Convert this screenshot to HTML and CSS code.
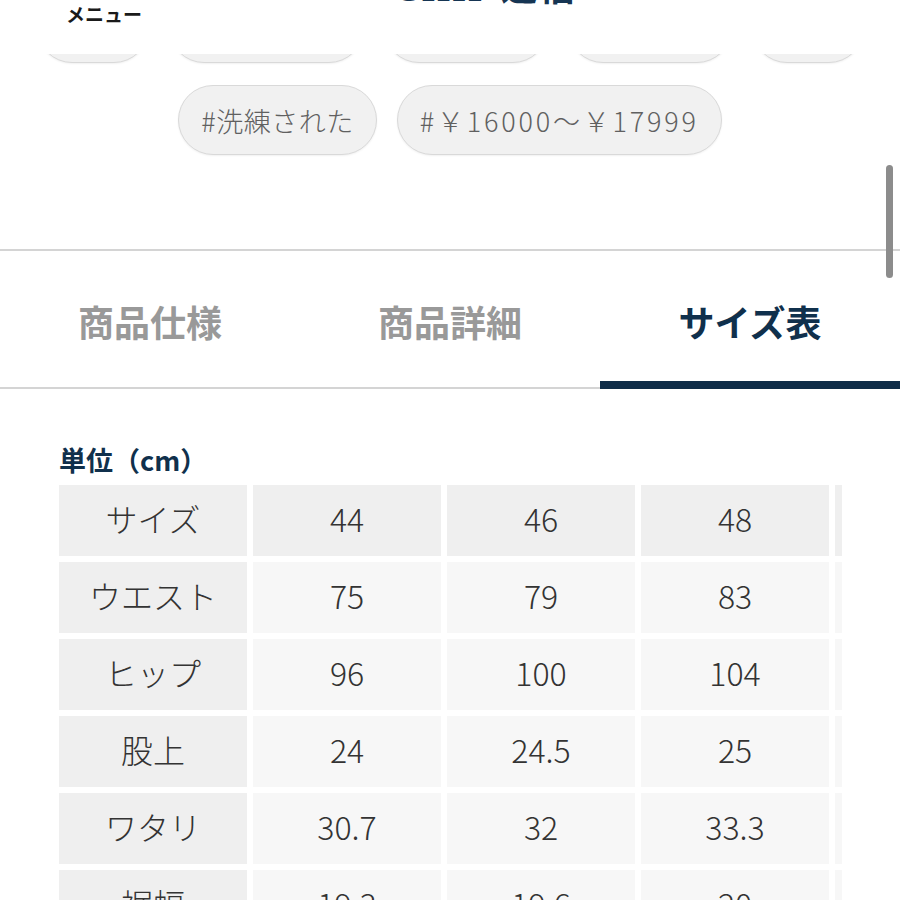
FILE: index.html
```html
<!DOCTYPE html>
<html lang="ja">
<head>
<meta charset="utf-8">
<title>サイズ表</title>
<link rel="stylesheet" href="styles.css">
</head>
<body>
<header class="header">
  <span class="menu-label">メニュー</span>
  <span class="logo">SHIP 通信</span>
</header>
<div class="scrollbar"></div>

<section class="tags">
  <div class="tag-row">
    <span class="chip w1"></span>
    <span class="chip w2"></span>
    <span class="chip w3"></span>
    <span class="chip w3"></span>
    <span class="chip w1"></span>
  </div>
  <div class="tag-row">
    <span class="chip">#洗練された</span>
    <span class="chip chip-price">#￥16000～￥17999</span>
  </div>
</section>

<nav class="tabs">
  <div class="tab">商品仕様</div>
  <div class="tab">商品詳細</div>
  <div class="tab active">サイズ表</div>
</nav>

<section class="size">
  <h2 class="unit">単位（cm）</h2>
  <div class="table-wrap">
    <div class="table">
      <div class="cell head">サイズ</div><div class="cell head">44</div><div class="cell head">46</div><div class="cell head">48</div><div class="cell head">50</div>
      <div class="cell label">ウエスト</div><div class="cell">75</div><div class="cell">79</div><div class="cell">83</div><div class="cell">87</div>
      <div class="cell label">ヒップ</div><div class="cell">96</div><div class="cell">100</div><div class="cell">104</div><div class="cell">108</div>
      <div class="cell label">股上</div><div class="cell">24</div><div class="cell">24.5</div><div class="cell">25</div><div class="cell">25.5</div>
      <div class="cell label">ワタリ</div><div class="cell">30.7</div><div class="cell">32</div><div class="cell">33.3</div><div class="cell">34.6</div>
      <div class="cell label">裾幅</div><div class="cell">19.3</div><div class="cell">19.6</div><div class="cell">20</div><div class="cell">20.4</div>
    </div>
  </div>
</section>
</body>
</html>
```
FILE: styles.css
```css
html, body {
  margin: 0;
  padding: 0;
  background: #ffffff;
  font-family: "Noto Sans CJK JP", "Noto Sans", sans-serif;
  color: #333333;
}

.header {
  position: fixed;
  top: 0;
  left: 0;
  right: 0;
  height: 54px;
  background: #ffffff;
  z-index: 5;
  overflow: hidden;
}

.menu-label {
  position: absolute;
  left: 66px;
  top: 0px;
  font-size: 19px;
  font-weight: 700;
  line-height: 28px;
  color: #1a1a1a;
}

.logo {
  position: absolute;
  left: 400px;
  top: -31px;
  font-family: "Liberation Serif", "Noto Sans CJK JP", serif;
  font-size: 36px;
  line-height: 40px;
  font-weight: 700;
  color: #163553;
  letter-spacing: 2px;
}

.scrollbar {
  position: fixed;
  left: 886px;
  top: 165px;
  width: 7px;
  height: 113px;
  border-radius: 4px;
  background: #8c8c8c;
  z-index: 6;
}

.tags {
  margin-top: -7px;
  display: flex;
  flex-direction: column;
  gap: 22px;
  padding-bottom: 94px;
}

.tag-row {
  display: flex;
  justify-content: center;
  gap: 20px;
}

.chip {
  box-sizing: border-box;
  height: 70px;
  padding: 0 22px;
  display: flex;
  align-items: center;
  border: 1.5px solid #d9d9d9;
  border-radius: 35px;
  background: #f1f1f1;
  color: #606060;
  font-size: 27px;
  font-weight: 300;
  letter-spacing: 0.5px;
  white-space: nowrap;
  box-shadow: 0 1px 2px rgba(0, 0, 0, 0.06);
}

.chip-price {
  letter-spacing: 2.8px;
}

.chip.w1 { width: 112px; }
.chip.w2 { width: 195px; }
.chip.w3 { width: 164px; }

.tabs {
  display: grid;
  grid-template-columns: repeat(3, 1fr);
  border-top: 2px solid #d4d4d4;
  border-bottom: 2px solid #d4d4d4;
}

.tab {
  position: relative;
  height: 136px;
  box-sizing: border-box;
  padding-top: 4px;
  display: flex;
  align-items: center;
  justify-content: center;
  font-size: 36px;
  font-weight: 700;
  color: #999999;
}

.tab.active {
  color: #10304c;
}

.tab.active::after {
  content: "";
  position: absolute;
  left: 0;
  right: 0;
  bottom: -2px;
  height: 8px;
  background: #0e2c47;
}

.size {
  padding: 54px 0 0 59px;
}

.unit {
  margin: 0 0 8px 0;
  font-size: 27px;
  line-height: 34px;
  font-weight: 700;
  color: #10304c;
}

.table-wrap {
  width: 783px;
  overflow: hidden;
}

.table {
  display: grid;
  grid-template-columns: repeat(5, 188px);
  grid-auto-rows: 71px;
  gap: 6px;
  width: max-content;
}

.cell {
  display: flex;
  align-items: center;
  justify-content: center;
  padding-bottom: 5px;
  box-sizing: border-box;
  background: #f7f7f7;
  font-size: 32px;
  font-weight: 300;
  color: #333333;
}

.cell.head,
.cell.label {
  background: #efefef;
}
```
